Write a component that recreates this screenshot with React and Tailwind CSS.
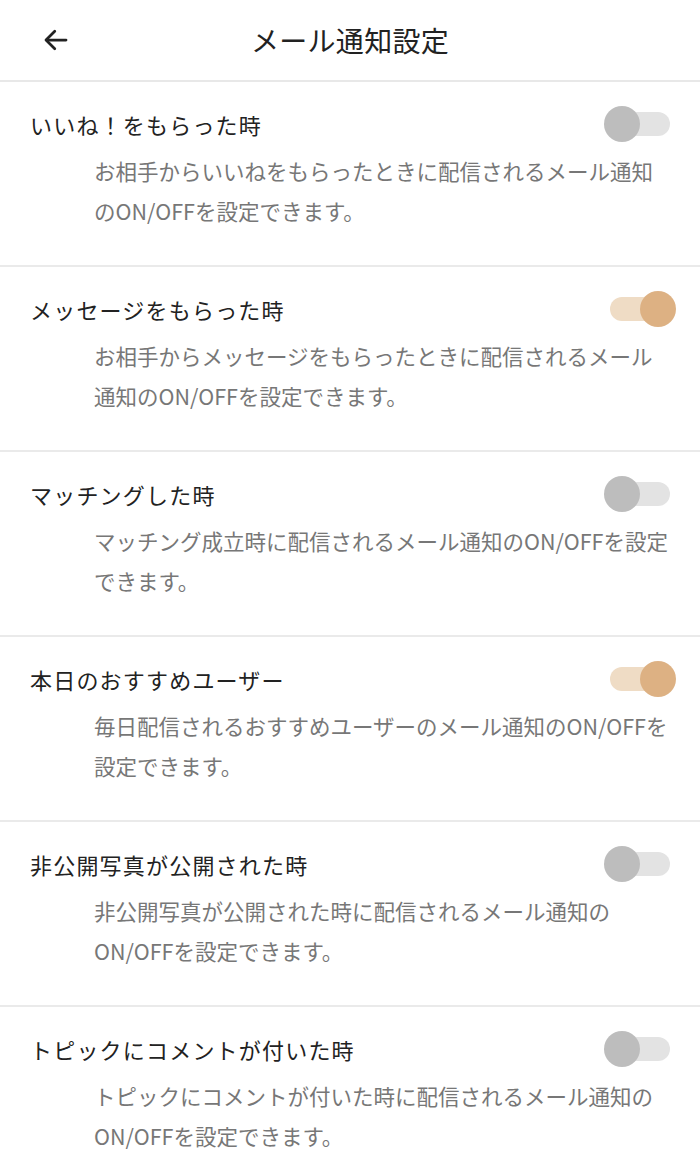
import React, { useState } from 'react';

const items = [
  {
    title: 'いいね！をもらった時',
    desc: ['お相手からいいねをもらったときに配信されるメール通知', 'のON/OFFを設定できます。'],
    on: false,
  },
  {
    title: 'メッセージをもらった時',
    desc: ['お相手からメッセージをもらったときに配信されるメール', '通知のON/OFFを設定できます。'],
    on: true,
  },
  {
    title: 'マッチングした時',
    desc: ['マッチング成立時に配信されるメール通知のON/OFFを設定', 'できます。'],
    on: false,
  },
  {
    title: '本日のおすすめユーザー',
    desc: ['毎日配信されるおすすめユーザーのメール通知のON/OFFを', '設定できます。'],
    on: true,
  },
  {
    title: '非公開写真が公開された時',
    desc: ['非公開写真が公開された時に配信されるメール通知の', 'ON/OFFを設定できます。'],
    on: false,
  },
  {
    title: 'トピックにコメントが付いた時',
    desc: ['トピックにコメントが付いた時に配信されるメール通知の', 'ON/OFFを設定できます。'],
    on: false,
  },
];

const Toggle = ({ on, onClick }) => (
  <button onClick={onClick} className="relative w-[72px] h-[36px] shrink-0">
    <span
      className={
        on
          ? 'absolute left-[6px] top-[6px] w-[60px] h-[24px] rounded-full bg-[#efdcc5]'
          : 'absolute left-[6px] top-[6px] w-[60px] h-[24px] rounded-full bg-[#e3e3e3]'
      }
    />
    <span
      className={
        on
          ? 'absolute right-0 top-0 w-[36px] h-[36px] rounded-full bg-[#ddb183]'
          : 'absolute left-0 top-0 w-[36px] h-[36px] rounded-full bg-[#bdbdbd]'
      }
    />
  </button>
);

const App = () => {
  const [states, setStates] = useState(items.map((i) => i.on));

  const flip = (idx) => {
    setStates(states.map((s, i) => (i === idx ? !s : s)));
  };

  return (
    <div
      className="min-h-screen bg-white text-[#222]"
      style={{ fontFamily: '"Noto Sans CJK JP", "Noto Sans", sans-serif' }}
    >
      <header className="h-[82px] flex items-center border-b-2 border-[#e8e8e8] relative">
        <button className="ml-[40px] w-[32px] h-[32px] flex items-center justify-center">
          <svg width="30" height="30" viewBox="0 0 24 24" fill="none" stroke="#222" strokeWidth="2.2" strokeLinecap="round" strokeLinejoin="round">
            <path d="M20 12H4.5" />
            <path d="M11 5l-7 7 7 7" />
          </svg>
        </button>
        <h1 className="absolute left-0 right-0 text-center text-[28px] tracking-[0.3px] pointer-events-none">
          メール通知設定
        </h1>
      </header>

      {items.map((item, idx) => (
        <section key={idx} className="border-b-2 border-[#eaeaea] pt-[24px] pb-[34px]">
          <div className="flex items-center justify-between pl-[30px] pr-[24px] h-[36px]">
            <h2 className="text-[22px] tracking-[1.2px] leading-[34px]">{item.title}</h2>
            <Toggle on={states[idx]} onClick={() => flip(idx)} />
          </div>
          <p className="mt-[9px] pl-[94px] text-[21.5px] leading-[40px] text-[#777] whitespace-nowrap">
            {item.desc[0]}
            <br />
            {item.desc[1]}
          </p>
        </section>
      ))}
    </div>
  );
};

export default App;
